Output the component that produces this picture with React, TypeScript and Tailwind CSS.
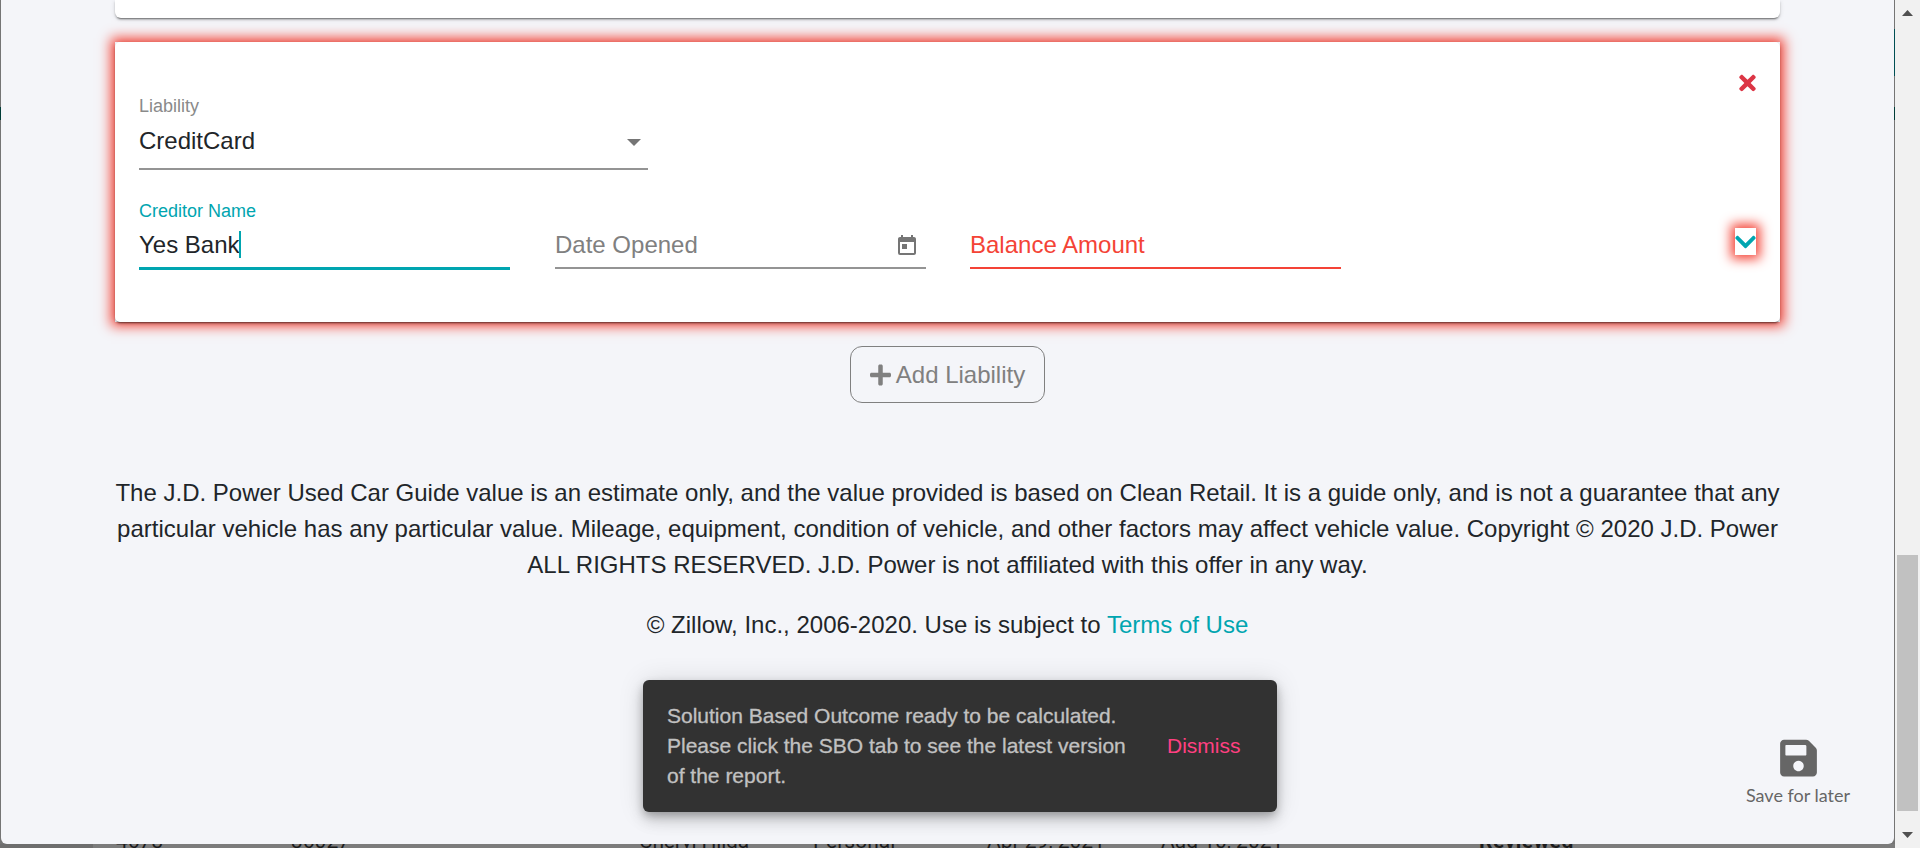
import { FaPlus, FaTimes, FaChevronDown, FaSave } from "react-icons/fa";
import { MdToday } from "react-icons/md";

const rows = [
  { text: "4673", cls: "w-[175px]" },
  { text: "36027", cls: "w-[348px]" },
  { text: "Cheryl Hilda", cls: "w-[174px] tracking-[-0.2px]" },
  { text: "Personal", cls: "w-[174px]" },
  { text: "Apr 29, 2021", cls: "w-[174px]" },
  { text: "Aug 10, 2021", cls: "w-[318px]" },
  { text: "Reviewed", cls: "font-bold tracking-[0.5px]" },
];

function LiabilityCard() {
  return (
    <section className="h-[280px] w-[1665px] shadow-[0_0_12px_4px_#f44336]">
      <div className="flex h-full flex-col rounded-[5px] bg-white px-6 shadow-[0_3px_1px_-2px_rgba(0,0,0,0.3),0_2px_2px_0_rgba(0,0,0,0.2),0_1px_5px_0_rgba(0,0,0,0.12)]">
        <div className="flex h-[128px] items-start justify-between">
          <div className="mt-[54px] h-[74px] w-[509px] border-b-2 border-[#949494]">
            <div className="h-[20px] text-[18px] leading-[20px] text-[#8a8a8a]">Liability</div>
            <div className="mt-[11px] flex h-[28px] items-center justify-between pr-[7px]">
              <span className="text-[24px] leading-[28px]">CreditCard</span>
              <span className="mt-[2px] h-0 w-0 border-x-[7.5px] border-t-[7.5px] border-x-transparent border-t-[#757575]" />
            </div>
          </div>
          <button className="mt-[29px] text-[24px] text-[#dc3545]">
            <FaTimes className="h-6 w-[17px]" />
          </button>
        </div>
        <div className="flex items-start pt-[31px]">
          <div className="h-[69px] w-[371px] border-b-3 border-[#00a5b0]">
            <div className="h-[20px] text-[18px] leading-[20px] text-[#00a5b0]">Creditor Name</div>
            <div className="mt-[10px] flex h-[28px] items-center text-[24px] leading-[28px]">
              Yes Bank
              <span className="-mt-[2px] -ml-px h-[27px] w-[2px] bg-[#00a5b0]" />
            </div>
          </div>
          <div className="ml-[45px] flex h-[68px] w-[371px] items-start justify-between border-b-2 border-[#949494] pt-[30px] pr-[7px]">
            <span className="text-[24px] leading-[28px] text-[#808080]">Date Opened</span>
            <MdToday className="mt-[3px] h-6 w-6 text-[#757575]" />
          </div>
          <div className="ml-[44px] h-[68px] w-[371px] border-b-2 border-[#f44336] pt-[30px] text-[24px] leading-[28px] text-[#f44336]">
            Balance Amount
          </div>
          <button className="mt-[27px] ml-auto flex h-[27px] w-[21px] items-center justify-center bg-white text-[#00a5b0] shadow-[0_0_12px_4px_#f44336]">
            <FaChevronDown className="h-6 w-[21px]" />
          </button>
        </div>
      </div>
    </section>
  );
}

function Snackbar() {
  return (
    <div className="absolute top-[680px] left-[643px] flex h-[132px] w-[634px] items-center rounded-[6px] bg-[#323232] px-6 text-[21px] leading-[30px] shadow-[0_4px_8px_-1px_rgba(0,0,0,0.25),0_9px_15px_0_rgba(0,0,0,0.14),0_1px_27px_0_rgba(0,0,0,0.12)]">
      <p className="w-[500px] whitespace-nowrap text-[#c1c1c1] [-webkit-text-stroke:0.3px_#c1c1c1]">
        Solution Based Outcome ready to be calculated.
        <br />
        Please click the SBO tab to see the latest version
        <br />
        of the report.
      </p>
      <button className="text-[#ff4081]">Dismiss</button>
    </div>
  );
}

function Scrollbar() {
  return (
    <div className="flex h-full w-[25px] shrink-0 flex-col items-center bg-[#f1f1f1]">
      <svg className="mt-[10px] h-[6px] w-[11px] text-[#505050]" viewBox="0 0 11 6">
        <path d="M0 6L5.5 0L11 6Z" fill="currentColor" />
      </svg>
      <div className="mt-[539px] h-[256px] w-[21px] bg-[#c1c1c1]" />
      <svg className="mt-[21px] h-[6px] w-[11px] text-[#505050]" viewBox="0 0 11 6">
        <path d="M0 0L5.5 6L11 0Z" fill="currentColor" />
      </svg>
    </div>
  );
}

export default function App() {
  return (
    <div className="relative flex h-[848px] w-[1920px] overflow-hidden bg-[#757575] font-['Liberation_Sans',Arial,sans-serif] text-[24px] text-[#212529]">
      <div className="relative h-[848px] w-[1895px]">
        <div className="absolute top-[29px] right-0 h-[47px] w-px bg-[#004f54]" />
        <div className="absolute top-[107px] left-0 h-[13px] w-full bg-[#003c37]" />
        <div className="relative ml-px flex h-[844px] w-[1893px] flex-col items-center rounded-b-[6px] bg-[#f4f5f9]">
          <div className="h-[18px] w-[1665px] shrink-0 rounded-b-[6px] bg-white shadow-[0_3px_1px_-2px_rgba(0,0,0,0.3),0_2px_2px_0_rgba(0,0,0,0.2),0_1px_5px_0_rgba(0,0,0,0.12)]" />
          <div className="h-6 shrink-0" />
          <LiabilityCard />
          <button className="mt-6 flex h-[57px] w-[195px] items-center justify-center rounded-[12px] border border-[#808080] text-[#808080]">
            <FaPlus className="mr-[5px] h-6 w-[21px]" />
            Add Liability
          </button>
          <p className="mt-[72px] text-center leading-[36px] whitespace-nowrap">
            The J.D. Power Used Car Guide value is an estimate only, and the value provided is based on Clean Retail. It is a guide only, and is not a guarantee that any
            <br />
            particular vehicle has any particular value. Mileage, equipment, condition of vehicle, and other factors may affect vehicle value. Copyright © 2020 J.D. Power
            <br />
            ALL RIGHTS RESERVED. J.D. Power is not affiliated with this offer in any way.
          </p>
          <p className="mt-6 leading-[36px]">
            © Zillow, Inc., 2006-2020. Use is subject to <a className="text-[#00a5b0]">Terms of Use</a>
          </p>
        </div>
        <div className="flex h-[4px] overflow-hidden border-l-[93px] border-[#6e6e6e] bg-[#7c7c7c] pl-[23px] font-['Roboto',sans-serif] text-[21px] leading-[21px] text-[#1c1c1c]">
          {rows.map((r) => (
            <span key={r.text} className={`-mt-[13px] shrink-0 whitespace-nowrap ${r.cls}`}>
              {r.text}
            </span>
          ))}
        </div>
      </div>
      <Scrollbar />
      <Snackbar />
      <div className="absolute top-[737px] left-[1738px] flex w-[120px] flex-col items-center text-[#666666]">
        <FaSave className="h-[42px] w-[37px]" />
        <span className="mt-[4px] font-['Lato',sans-serif] text-[18px] leading-[24px]">Save for later</span>
      </div>
    </div>
  );
}
